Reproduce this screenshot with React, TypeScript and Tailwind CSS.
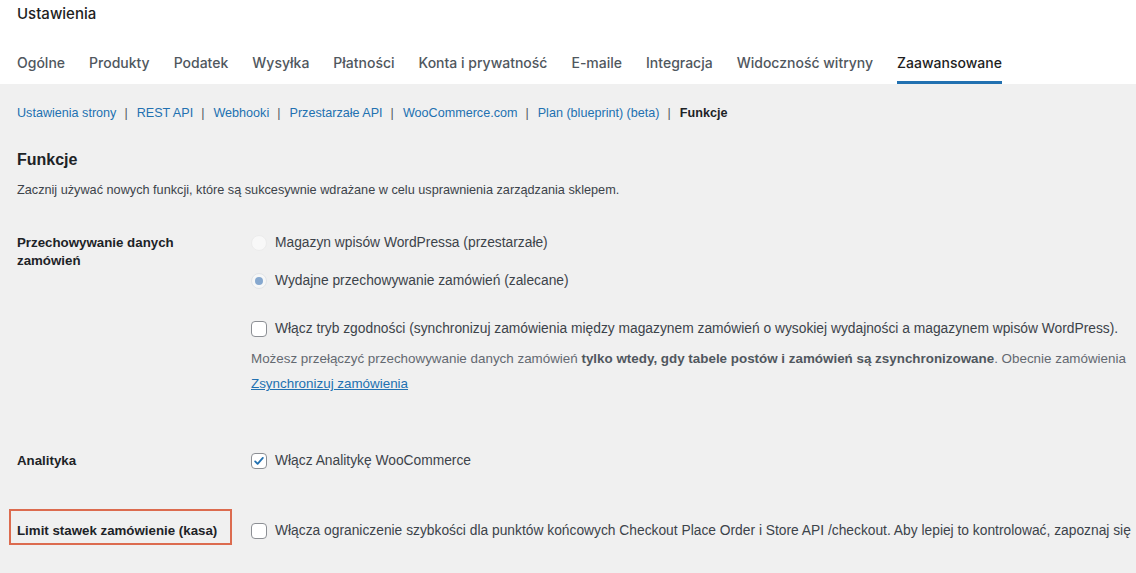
import React from 'react'

const TABS = ['Ogólne', 'Produkty', 'Podatek', 'Wysyłka', 'Płatności', 'Konta i prywatność', 'E-maile', 'Integracja', 'Widoczność witryny', 'Zaawansowane']
const SUBNAV = ['Ustawienia strony', 'REST API', 'Webhooki', 'Przestarzałe API', 'WooCommerce.com', 'Plan (blueprint) (beta)']

const body = "font-['Liberation_Sans',sans-serif]"

function Checkbox({ checked }: { checked?: boolean }) {
  return (
    <span className="w-4 h-4 shrink-0 rounded-[4px] border border-[#8c8f94] bg-white flex items-center justify-center">
      {checked && (
        <svg viewBox="0 0 20 20" className="w-[18px] h-[18px] -mt-[1px]">
          <path d="M4.5 10.5l3.5 3.5 7.5-8.5" fill="none" stroke="#2271b1" strokeWidth={2.6} strokeLinecap="round" strokeLinejoin="round" />
        </svg>
      )}
    </span>
  )
}

function Radio({ checked }: { checked?: boolean }) {
  return (
    <span className={`w-4 h-4 shrink-0 rounded-full flex items-center justify-center ${checked ? 'border border-[#e2e4e7] bg-[#f6f7f7]' : 'border border-[#ececec] bg-[#f8f8f8]'}`}>
      {checked && <span className="w-2 h-2 rounded-full bg-[#86a8cf]" />}
    </span>
  )
}

export default function App() {
  return (
    <div className={`w-[1136px] h-[573px] overflow-hidden bg-[#f0f0f0] text-[#3c434a] ${body}`}>
      <div className="bg-white px-[17px] h-[84px]">
        <h1 className="h-[28px] flex items-center text-[15px] font-medium text-[#1e1e1e] font-['Inter',sans-serif]">Ustawienia</h1>
        <nav className="flex gap-[24px] mt-[12px] font-['Inter',sans-serif] text-[14px] font-medium">
          {TABS.map(t => (
            <span
              key={t}
              className={`h-[44px] pt-[3px] flex items-center border-b-[3px] whitespace-nowrap ${t === 'Zaawansowane' ? 'border-[#2271b1] text-[#1e1e1e]' : 'border-transparent text-[#50575e]'}`}
            >
              {t}
            </span>
          ))}
        </nav>
      </div>

      <div className="px-[17px] text-[13px]">
        <div className="pt-[20px] h-[38px] leading-[18px] whitespace-nowrap flex text-[12.6px]">
          {SUBNAV.map(s => (
            <span key={s} className="flex">
              <span className="text-[#2271b1]">{s}</span>
              <span className="text-[#50575e] ml-[8px] mr-[9px]">|</span>
            </span>
          ))}
          <span className="font-bold text-[#1d2327]">Funkcje</span>
        </div>

        <h2 className="mt-[26px] text-[16px] leading-[24px] font-bold text-[#1d2327]">Funkcje</h2>
        <p className="mt-[9px] leading-[18px] text-[12.7px]">Zacznij używać nowych funkcji, które są sukcesywnie wdrażane w celu usprawnienia zarządzania sklepem.</p>

        <div className="flex mt-[35px]">
          <div className="w-[234px] shrink-0 font-bold text-[#1d2327] leading-[18px] text-[13.3px]">Przechowywanie danych<br />zamówień</div>
          <div className="flex flex-col whitespace-nowrap leading-[18px] text-[13.8px]">
            <label className="flex items-center gap-[8px] h-[18px]"><Radio />Magazyn wpisów WordPressa (przestarzałe)</label>
            <label className="flex items-center gap-[8px] h-[18px] mt-[20px]"><Radio checked />Wydajne przechowywanie zamówień (zalecane)</label>
            <label className="flex items-center gap-[8px] h-[18px] mt-[30px]"><Checkbox />Włącz tryb zgodności (synchronizuj zamówienia między magazynem zamówień o wysokiej wydajności a magazynem wpisów WordPress).</label>
            <p className="mt-[12px] text-[#646970] text-[13.4px]">
              Możesz przełączyć przechowywanie danych zamówień <b className="text-[#50575e]">tylko wtedy, gdy tabele postów i zamówień są zsynchronizowane</b>. Obecnie zamówienia
            </p>
            <a className="mt-[7px] text-[#2271b1] underline w-max text-[13.4px]">Zsynchronizuj zamówienia</a>
          </div>
        </div>

        <div className="flex mt-[59px] leading-[18px]">
          <div className="w-[234px] shrink-0 font-bold text-[#1d2327] text-[13.3px]">Analityka</div>
          <label className="flex items-center gap-[8px] whitespace-nowrap text-[13.8px]"><Checkbox checked />Włącz Analitykę WooCommerce</label>
        </div>

        <div className="flex mt-[52px] leading-[18px]">
          <div className="w-[234px] shrink-0 font-bold text-[#1d2327] relative text-[13.3px]">
            Limit stawek zamówienie (kasa)
            <span className="absolute left-[-8px] top-[-13px] w-[223px] h-[36px] border-[2.5px] border-[#dc6b4f]" />
          </div>
          <label className="flex items-center gap-[8px] whitespace-nowrap text-[13.8px]"><Checkbox />Włącza ograniczenie szybkości dla punktów końcowych Checkout Place Order i Store API /checkout. Aby lepiej to kontrolować, zapoznaj się</label>
        </div>
      </div>
    </div>
  )
}
